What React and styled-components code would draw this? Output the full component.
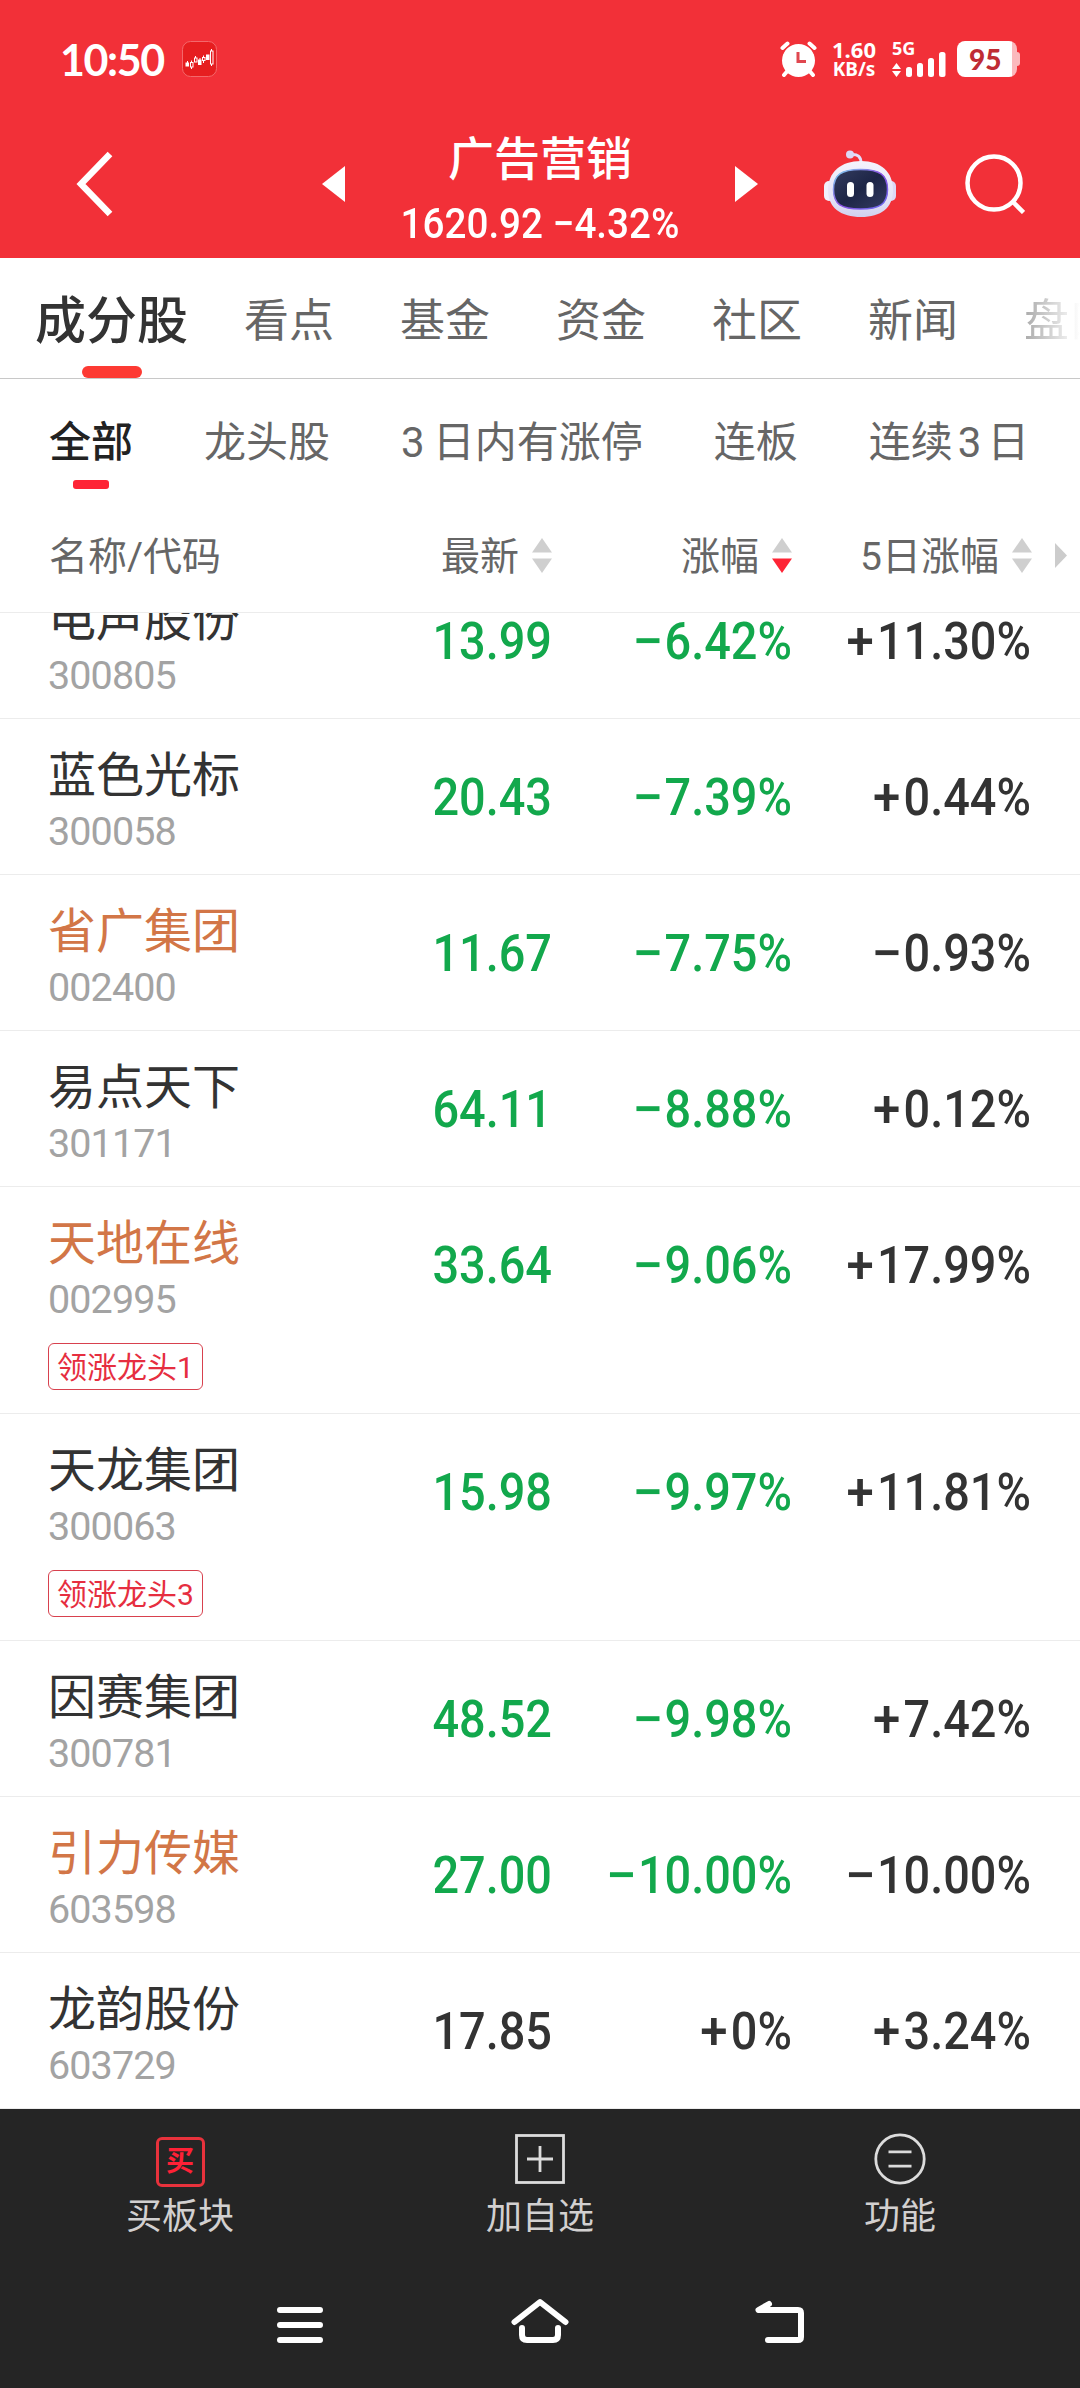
import styled, { createGlobalStyle } from "styled-components";

const GlobalStyle = createGlobalStyle`
  * {
    box-sizing: border-box;
  }

  body {
    margin: 0;
    background: #fff;
    font-family: Roboto, "Noto Sans CJK SC", sans-serif;
    text-autospace: no-autospace;
  }
`;

const Screen = styled.main`
  width: 1080px;
  height: 2388px;
  display: flex;
  flex-direction: column;
  overflow: hidden;
  background: #fff;
  color: #333;
  white-space: nowrap;
`;

const Header = styled.header`
  flex: none;
  height: 258px;
  background: #f23038;
  color: #fff;
`;

const StatusBar = styled.div`
  height: 118px;
  padding: 0 60px 0 60px;
  display: flex;
  align-items: center;
`;

const Clock = styled.span`
  width: 122px;
  font-family: Lato, sans-serif;
  font-size: 43px;
  font-weight: 700;
  letter-spacing: -1.4px;
`;

const StatusIcons = styled.div`
  margin-left: auto;
  display: flex;
  align-items: center;
`;

const Speed = styled.div`
  width: 44px;
  margin: 0 16px 0 15px;
  font-family: "Noto Sans", sans-serif;
  font-weight: 700;
  text-align: center;
`;

const SpeedValue = styled.div`
  font-size: 22px;
  line-height: 20px;
`;

const SpeedUnit = styled.div`
  font-size: 19px;
  line-height: 20px;
`;

const Signal = styled.div`
  width: 54px;
  height: 36px;
  margin-right: 11px;
`;

const Network = styled.div`
  height: 14px;
  font-family: "Noto Sans", sans-serif;
  font-size: 18px;
  font-weight: 700;
  line-height: 14px;
`;

const SignalArt = styled.svg`
  display: block;
  margin-top: -4px;
`;

const Battery = styled.div`
  width: 60px;
  height: 36px;
  border-radius: 8px;
  background: linear-gradient(90deg, #fff 55px, #fbb9bd 55px);
  color: #bf2c34;
  font-family: Lato, sans-serif;
  font-size: 28px;
  font-weight: 900;
  line-height: 36px;
  padding-left: 12px;
`;

const BatteryWrap = styled.div`
  display: flex;
  align-items: center;
`;

const BatteryNub = styled.div`
  width: 3px;
  height: 14px;
  border-radius: 0 3px 3px 0;
  background: #fbb9bd;
`;

const TitleBar = styled.div`
  height: 140px;
  display: flex;
  align-items: center;
  padding: 0 55px 8px 76px;
`;

const BackArt = styled.svg`
  margin-right: 209px;
`;

const TitleBlock = styled.div`
  width: 390px;
  height: 132px;
  text-align: center;
`;

const Title = styled.h1`
  margin: 0;
  padding-top: 6px;
  font-size: 46px;
  font-weight: 500;
  line-height: 70px;
`;

const IndexLine = styled.div`
  font-size: 42px;
  font-weight: 500;
  line-height: 60px;
  transform: scaleX(0.92);
`;

const RobotArt = styled.svg`
  margin-left: 66px;
`;

const SearchArt = styled.svg`
  margin-left: auto;
`;

const Tabs = styled.nav`
  flex: none;
  height: 121px;
  border-bottom: 1px solid #c8c8c8;
  padding-left: 35px;
  display: flex;
  overflow: hidden;
`;

const Tab = styled.div`
  flex: none;
  width: ${(p) => (p.$active ? "153px" : "90px")};
  margin-right: ${(p) => (p.$active ? "56px" : "66px")};
  padding-top: 20px;
  display: flex;
  flex-direction: column;
  align-items: center;
  color: ${(p) => (p.$active ? "#333" : "#666")};
  font-size: ${(p) => (p.$active ? "51px" : "45px")};
  font-weight: ${(p) => (p.$active ? 500 : 400)};
  line-height: 88px;

  ${(p) =>
    p.$faded &&
    `
    background: linear-gradient(90deg, #aaa, #fff 56px);
    background-clip: text;
    color: transparent;
  `}

  &::after {
    content: "";
    display: ${(p) => (p.$active ? "block" : "none")};
    width: 60px;
    height: 12px;
    border-radius: 6px;
    background: #fd3a33;
  }
`;

const Filters = styled.nav`
  flex: none;
  height: 132px;
  padding-left: 49px;
  display: flex;
  gap: 71px;
  overflow: hidden;
`;

const Filter = styled.div`
  flex: none;
  display: flex;
  flex-direction: column;
  align-items: center;
  color: ${(p) => (p.$active ? "#222" : "#666")};
  font-size: 42px;
  font-weight: ${(p) => (p.$active ? 500 : 400)};
  line-height: 99px;
  padding-top: 14px;

  &::after {
    content: "";
    display: ${(p) => (p.$active ? "block" : "none")};
    width: 36px;
    height: 9px;
    margin-top: -12px;
    border-radius: 3px;
    background: #fe2435;
  }
`;

const FilterDigit = styled.span`
  padding: ${(p) => (p.$leading ? "0 8px 0 0" : "0 6px 0 5px")};
`;

const columns = `
  display: grid;
  grid-template-columns: 312px 240px 240px 239px;
`;

const TableHead = styled.div`
  ${columns}
  flex: none;
  height: 102px;
  padding-right: 13px;
  grid-template-columns: 312px 240px 240px 240px 1fr;
  align-items: center;
  border-bottom: 1px solid #ececec;
  color: #666;
  font-size: 39px;
`;

const HeadName = styled.div`
  padding-left: 49px;
  line-height: 80px;
  padding-bottom: 10px;
`;

const HeadCell = styled.div`
  display: flex;
  align-items: center;
  justify-content: flex-end;
  gap: 13px;
  line-height: 80px;
  padding-bottom: 10px;
`;

const SortArt = styled.svg`
  flex: none;
  margin-top: -2px;
`;

const List = styled.section`
  flex: 1;
  min-height: 0;
  display: flex;
  flex-direction: column;
  justify-content: flex-end;
  overflow: hidden;
`;

const Row = styled.article`
  ${columns}
  flex: none;
  height: ${(p) => (p.$tagged ? "227px" : "156px")};
  border-bottom: 1px solid #ececec;
`;

const Stock = styled.div`
  padding: 27px 0 0 48px;
`;

const StockName = styled.div`
  height: 62px;
  color: ${(p) => (p.$margin ? "#d27647" : "#333")};
  font-size: 48px;
  line-height: 60px;
`;

const StockCode = styled.div`
  height: 67px;
  color: #a3a3a3;
  font-size: 39.5px;
  letter-spacing: -0.9px;
  line-height: 48px;
`;

const Tag = styled.span`
  display: inline-block;
  height: 47px;
  padding: 0 8px;
  border: 1px solid #d8414e;
  border-radius: 6px;
  color: #e62e40;
  font-size: 30px;
  line-height: 48px;
`;

const Figure = styled.div`
  color: ${(p) => (p.$down ? "#12a84c" : "#333")};
  font-size: 51.5px;
  font-weight: 500;
  line-height: 158px;
  text-align: right;
  transform: scaleX(0.91);
  transform-origin: right;
`;

const Sign = styled.span`
  display: inline-block;
  margin-right: 4px;
  transform: scaleX(${(p) => (p.$minus ? 1.18 : 1.05)});
`;

const Actions = styled.footer`
  flex: none;
  height: 151px;
  display: grid;
  grid-template-columns: repeat(3, 1fr);
  background: #252525;
`;

const Action = styled.div`
  display: flex;
  flex-direction: column;
  align-items: center;
  padding-top: 22px;
  color: #d2d0d0;
  font-size: 36px;
  line-height: 52px;
`;

const ActionIcon = styled.div`
  width: 54px;
  height: 56px;
  margin-bottom: 4px;
  display: flex;
  align-items: center;
  justify-content: center;
`;

const BuyBox = styled.div`
  width: 49px;
  height: 50px;
  margin-top: 5px;
  border: 3px solid #e8323c;
  border-radius: 6px;
  color: #ff2136;
  font-size: 28px;
  font-weight: 700;
  line-height: 44px;
  text-align: center;
`;

const SystemNav = styled.nav`
  flex: none;
  height: 128px;
  padding: 0 270px;
  display: flex;
  align-items: flex-start;
  justify-content: space-between;
  background: #252525;
`;

const tabs = ["成分股", "看点", "基金", "资金", "社区", "新闻", "盘口"];

const stocks = [
  { name: "电声股份", code: "300805", price: "13.99", change: "−6.42%", five: "+11.30%" },
  { name: "蓝色光标", code: "300058", price: "20.43", change: "−7.39%", five: "+0.44%" },
  { name: "省广集团", code: "002400", price: "11.67", change: "−7.75%", five: "−0.93%", margin: true },
  { name: "易点天下", code: "301171", price: "64.11", change: "−8.88%", five: "+0.12%" },
  { name: "天地在线", code: "002995", price: "33.64", change: "−9.06%", five: "+17.99%", margin: true, tag: "领涨龙头1" },
  { name: "天龙集团", code: "300063", price: "15.98", change: "−9.97%", five: "+11.81%", tag: "领涨龙头3" },
  { name: "因赛集团", code: "300781", price: "48.52", change: "−9.98%", five: "+7.42%" },
  { name: "引力传媒", code: "603598", price: "27.00", change: "−10.00%", five: "−10.00%", margin: true },
  { name: "龙韵股份", code: "603729", price: "17.85", change: "+0%", five: "+3.24%" },
];

function Percent({ value, down }) {
  return (
    <Figure $down={down}>
      <Sign $minus={value[0] === "−"}>{value[0]}</Sign>
      {value.slice(1)}
    </Figure>
  );
}

function SortIcon({ desc }) {
  return (
    <SortArt width="20" height="35" viewBox="0 0 20 35">
      <path d="M10 0L20 14.5H0z" fill="#cfcfcf" />
      <path d="M0 20.5h20L10 35z" fill={desc ? "#fe2435" : "#cfcfcf"} />
    </SortArt>
  );
}

function AppIcon() {
  return (
    <svg width="35" height="36" viewBox="0 0 35 36">
      <rect x="0.5" y="0.5" width="34" height="35" rx="8" fill="#e61e20" stroke="#f4686b" />
      <g fill="#fff">
        <rect x="3.5" y="21.5" width="3.5" height="4" />
        <rect x="16" y="18.5" width="3.5" height="5.5" />
        <rect x="24" y="13.5" width="3.5" height="5.5" />
      </g>
      <g fill="none" stroke="#fff">
        <path d="M9.5 19.5v2M9.5 26v2M13.5 15v2M21.5 14.5v2M21.5 20v2M29.5 8v2M29.5 23v2M5.500 20v2M18 17v2" />
        <rect x="8.5" y="21.5" width="2.5" height="4.500" />
        <rect x="12.5" y="17" width="2.500" height="4" />
        <rect x="20.5" y="16.5" width="2.500" height="3" />
        <rect x="28.5" y="10" width="2.500" height="13" />
      </g>
    </svg>
  );
}

function AlarmIcon() {
  return (
    <svg width="37" height="36" viewBox="0 0 37 36">
      <circle cx="18.5" cy="19.5" r="16.5" fill="#fff" />
      <path
        d="M2.5 7l5-4.500M34.500 7l-5-4.500M7 30.500l-3 3.500M30 30.500l3 3.500"
        stroke="#fff"
        strokeWidth="4"
        strokeLinecap="round"
      />
      <circle cx="18.5" cy="19.5" r="17.500" fill="none" stroke="#f23038" strokeDasharray="13 97" strokeDashoffset="-61" />
      <circle cx="18.5" cy="19.5" r="17.500" fill="none" stroke="#f23038" strokeDasharray="13 97" strokeDashoffset="-90" />
      <path d="M18 11v9.500h8" fill="none" stroke="#e0474f" strokeWidth="3" />
    </svg>
  );
}

function Robot() {
  return (
    <RobotArt width="72" height="68" viewBox="0 0 72 68">
      <defs>
        <linearGradient id="shell" x1="0" y1="0" x2="0" y2="1">
          <stop offset="0" stopColor="#f4f2fc" />
          <stop offset="0.7" stopColor="#e4e2f7" />
          <stop offset="1" stopColor="#d0d0ee" />
        </linearGradient>
        <linearGradient id="visor" x1="0" y1="0" x2="1" y2="1">
          <stop offset="0" stopColor="#343c60" />
          <stop offset="0.5" stopColor="#1d2546" />
          <stop offset="1" stopColor="#343b62" />
        </linearGradient>
        <linearGradient id="rim" x1="0" y1="0" x2="1" y2="1">
          <stop offset="0" stopColor="#7fd8f0" />
          <stop offset="0.5" stopColor="#8a4fe0" />
          <stop offset="1" stopColor="#6a6df0" />
        </linearGradient>
      </defs>
      <path d="M27 4.500q10-1 10 8.500" fill="none" stroke="#e3defa" strokeWidth="3" />
      <circle cx="26" cy="4.500" r="4" fill="#dcd8f6" />
      <rect x="0" y="31" width="10" height="20" rx="5" fill="#f1f0fc" />
      <rect x="62" y="31" width="10" height="20" rx="5" fill="#ddd8f6" />
      <path d="M37 11c20 0 32 11 32 29S57 67 37 67 4 58 4 40s13-29 33-29z" fill="url(#shell)" />
      <path
        d="M36.500 19.500c19 0 27 5 27 20s-8 19.500-27 19.500-27-4.500-27-19.500 8-20 27-20z"
        fill="url(#visor)"
        stroke="url(#rim)"
        strokeWidth="1.500"
      />
      <rect x="23" y="32" width="7" height="15" rx="3.500" fill="#fff" />
      <rect x="42.5" y="32" width="7" height="15" rx="3.500" fill="#fff" />
    </RobotArt>
  );
}

export default function App() {
  return (
    <Screen>
      <GlobalStyle />
      <Header>
        <StatusBar>
          <Clock>10:50</Clock>
          <AppIcon />
          <StatusIcons>
            <AlarmIcon />
            <Speed>
              <SpeedValue>1.60</SpeedValue>
              <SpeedUnit>KB/s</SpeedUnit>
            </Speed>
            <Signal>
              <Network>5G</Network>
              <SignalArt width="54" height="26" viewBox="0 0 54 26" fill="#fff">
                <path d="M4.500 12l4.500 6H0zM4.500 26L0 20h9z" />
                <rect x="14" y="16" width="6" height="10" rx="2.500" />
                <rect x="25" y="12" width="6" height="14" rx="2.500" />
                <rect x="36" y="7" width="6" height="19" rx="2.500" />
                <rect x="47" y="1" width="6.500" height="25" rx="2.500" />
              </SignalArt>
            </Signal>
            <BatteryWrap>
              <Battery>95</Battery>
              <BatteryNub />
            </BatteryWrap>
          </StatusIcons>
        </StatusBar>
        <TitleBar>
          <BackArt width="37" height="66" viewBox="0 0 37 66">
            <path d="M34 3L5 33l29 30" fill="none" stroke="#fff" strokeWidth="6.500" />
          </BackArt>
          <svg width="23" height="36" viewBox="0 0 23 36">
            <path d="M23 0v36L0 18z" fill="#fff" />
          </svg>
          <TitleBlock>
            <Title>广告营销</Title>
            <IndexLine>1620.92 −4.32%</IndexLine>
          </TitleBlock>
          <svg width="23" height="36" viewBox="0 0 23 36">
            <path d="M0 0v36l23-18z" fill="#fff" />
          </svg>
          <Robot />
          <SearchArt width="60" height="60" viewBox="0 0 60 60">
            <circle cx="29" cy="29" r="26.500" fill="none" stroke="#fff" strokeWidth="4.500" />
            <path d="M48 48l10.500 10.500" stroke="#fff" strokeWidth="4.500" />
          </SearchArt>
        </TitleBar>
      </Header>

      <Tabs>
        {tabs.map((tab, i) => (
          <Tab key={tab} $active={i === 0} $faded={i === tabs.length - 1}>
            {tab}
          </Tab>
        ))}
      </Tabs>

      <Filters>
        <Filter $active>全部</Filter>
        <Filter>龙头股</Filter>
        <Filter>
          <span>
            <FilterDigit $leading>3</FilterDigit>日内有涨停
          </span>
        </Filter>
        <Filter>连板</Filter>
        <Filter>
          <span>
            连续<FilterDigit>3</FilterDigit>日
          </span>
        </Filter>
      </Filters>

      <TableHead>
        <HeadName>名称/代码</HeadName>
        <HeadCell>
          最新
          <SortIcon />
        </HeadCell>
        <HeadCell>
          涨幅
          <SortIcon desc />
        </HeadCell>
        <HeadCell>
          5日涨幅
          <SortIcon />
        </HeadCell>
        <HeadCell>
          <SortArt width="12" height="25" viewBox="0 0 12 25">
            <path d="M0 0l12 12.500L0 25z" fill="#ccc" />
          </SortArt>
        </HeadCell>
      </TableHead>

      <List>
        {stocks.map((s) => (
          <Row key={s.code} $tagged={Boolean(s.tag)}>
            <Stock>
              <StockName $margin={s.margin}>{s.name}</StockName>
              <StockCode>{s.code}</StockCode>
              {s.tag && <Tag>{s.tag}</Tag>}
            </Stock>
            <Figure $down={s.change !== "+0%"}>{s.price}</Figure>
            <Percent down={s.change !== "+0%"} value={s.change} />
            <Percent value={s.five} />
          </Row>
        ))}
      </List>

      <Actions>
        <Action>
          <ActionIcon>
            <BuyBox>买</BuyBox>
          </ActionIcon>
          买板块
        </Action>
        <Action>
          <ActionIcon>
            <svg width="50" height="50" viewBox="0 0 50 50" fill="none" stroke="#dcdcdc" strokeWidth="2.800">
              <rect x="1.500" y="1.500" width="47" height="47" />
              <path d="M12 25h26M25 12v26" />
            </svg>
          </ActionIcon>
          加自选
        </Action>
        <Action>
          <ActionIcon>
            <svg width="52" height="52" viewBox="0 0 52 52" fill="none" stroke="#dcdcdc" strokeWidth="2.800">
              <circle cx="26" cy="26" r="24.200" />
              <path d="M14.500 18.800h23M14.500 33.200h23" />
            </svg>
          </ActionIcon>
          功能
        </Action>
      </Actions>

      <SystemNav>
        <svg width="60" height="128" viewBox="0 0 60 128" stroke="#fff" strokeWidth="6" strokeLinecap="round">
          <path d="M10 50h40M10 65h40M10 80h40" />
        </svg>
        <svg width="60" height="128" viewBox="0 0 60 128" fill="none" stroke="#fff" strokeWidth="6" strokeLinecap="round" strokeLinejoin="round">
          <path d="M4.500 62L30 42l25.500 20M12 68v7q0 5 5 5h26q5 0 5-5v-7" />
        </svg>
        <svg width="60" height="128" viewBox="0 0 60 128" fill="none" stroke="#fff" strokeWidth="6" strokeLinecap="round" strokeLinejoin="round">
          <path d="M19 44L8.500 50H48q3 0 3 3v24q0 3-3 3H18" />
        </svg>
      </SystemNav>
    </Screen>
  );
}
